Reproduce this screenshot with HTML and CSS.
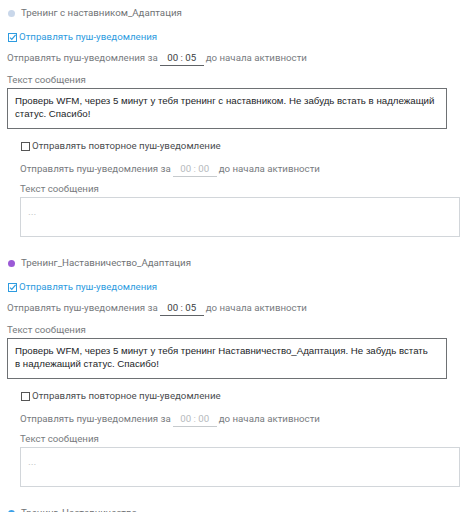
FILE: index.html
```html
<!DOCTYPE html>
<html lang="ru">
<head>
<meta charset="utf-8">
<link rel="stylesheet" href="styles.css">
</head>
<body>
<div class="page">
  <section class="block">
    <div class="title"><span class="dot dot-blue"></span>Тренинг с наставником_Адаптация</div>
    <div class="check check-on"><span class="box"><svg viewBox="0 0 9 9" width="9" height="9"><rect x="0.5" y="0.5" width="8" height="8" fill="none" stroke="#2d9be0" stroke-width="1"/><path d="M2 4.6 L3.8 6.4 L7.6 1.8" fill="none" stroke="#2d9be0" stroke-width="1.2"/></svg></span>Отправлять пуш-уведомления</div>
    <div class="timerow">Отправлять пуш-уведомления за<span class="time">00 : 05</span>до начала активности</div>
    <div class="label">Текст сообщения</div>
    <div class="msg">Проверь WFM, через 5 минут у тебя тренинг с наставником. Не забудь встать в надлежащий статус. Спасибо!</div>
    <div class="repeat">
      <div class="check check-off"><span class="box"><svg viewBox="0 0 9 9" width="9" height="9"><rect x="0.5" y="0.5" width="8" height="8" fill="none" stroke="#555" stroke-width="1"/></svg></span>Отправлять повторное пуш-уведомление</div>
      <div class="timerow">Отправлять пуш-уведомления за<span class="time time-off">00 : 00</span>до начала активности</div>
      <div class="label">Текст сообщения</div>
      <div class="msg msg-off">...</div>
    </div>
  </section>
  <section class="block">
    <div class="title"><span class="dot dot-purple"></span>Тренинг_Наставничество_Адаптация</div>
    <div class="check check-on"><span class="box"><svg viewBox="0 0 9 9" width="9" height="9"><rect x="0.5" y="0.5" width="8" height="8" fill="none" stroke="#2d9be0" stroke-width="1"/><path d="M2 4.6 L3.8 6.4 L7.6 1.8" fill="none" stroke="#2d9be0" stroke-width="1.2"/></svg></span>Отправлять пуш-уведомления</div>
    <div class="timerow">Отправлять пуш-уведомления за<span class="time">00 : 05</span>до начала активности</div>
    <div class="label">Текст сообщения</div>
    <div class="msg">Проверь WFM, через 5 минут у тебя тренинг Наставничество_Адаптация. Не забудь встать в&nbsp;надлежащий статус. Спасибо!</div>
    <div class="repeat">
      <div class="check check-off"><span class="box"><svg viewBox="0 0 9 9" width="9" height="9"><rect x="0.5" y="0.5" width="8" height="8" fill="none" stroke="#555" stroke-width="1"/></svg></span>Отправлять повторное пуш-уведомление</div>
      <div class="timerow">Отправлять пуш-уведомления за<span class="time time-off">00 : 00</span>до начала активности</div>
      <div class="label">Текст сообщения</div>
      <div class="msg msg-off">...</div>
    </div>
  </section>
  <section class="block">
    <div class="title"><span class="dot dot-blue2"></span>Тренинг_Наставничество</div>
  </section>
</div>
</body>
</html>
```

FILE: styles.css
```css
html, body {
  margin: 0;
  padding: 0;
  background: #ffffff;
}
body {
  font-family: Roboto, "Liberation Sans", Arial, sans-serif;
  font-size: 9.7px;
  color: #777a7e;
}
.page {
  padding: 6px 0 0 7px;
  height: 506px;
  overflow: hidden;
}
.block {
  display: flex;
  flex-direction: column;
  margin-bottom: 19px;
}
.title {
  display: flex;
  align-items: center;
  height: 14px;
  line-height: 14px;
  color: #6f7275;
}
.dot {
  width: 7px;
  height: 7px;
  border-radius: 50%;
  margin: 0 6px 0 1px;
}
.dot-blue { background: #c9d7ea; }
.dot-purple { background: #9b5ad6; }
.dot-blue2 { background: #3aa0e8; }
.check {
  display: flex;
  align-items: center;
  height: 14px;
  line-height: 14px;
  margin-top: 10px;
}
.check-on { color: #2d9be0; }
.check-off { color: #4a4d50; }
.box {
  display: flex;
  width: 9px;
  height: 9px;
  margin: 0 2px 0 1px;
}
.timerow {
  display: flex;
  align-items: center;
  height: 14px;
  line-height: 14px;
  margin-top: 7px;
}
.time {
  display: inline-block;
  width: 44px;
  text-align: center;
  border-bottom: 1px solid #5f6266;
  color: #3b3e42;
  margin: 0 2px 0 2px;
  line-height: 14px;
  padding-top: 1px;
}
.time-off {
  color: #b6babd;
  border-bottom-color: #c6cacd;
}
.label {
  height: 14px;
  line-height: 14px;
  margin-top: 8px;
}
.msg {
  margin-top: 1px;
  box-sizing: border-box;
  width: 440px;
  height: 41px;
  border: 1px solid #6e7174;
  padding: 5px 5px 5px 7px;
  font-family: "Liberation Sans", Arial, sans-serif;
  font-size: 9.7px;
  color: #222427;
  line-height: 13px;
}
.msg-off {
  color: #c4c7ca;
  border-color: #d2d6da;
  padding-top: 7px;
  height: 40px;
}
.repeat {
  display: flex;
  flex-direction: column;
  padding-left: 13px;
}
.repeat .check { margin-top: 10px; }
.repeat .timerow { margin-top: 9px; }
.repeat .label { margin-top: 6px; }
```
